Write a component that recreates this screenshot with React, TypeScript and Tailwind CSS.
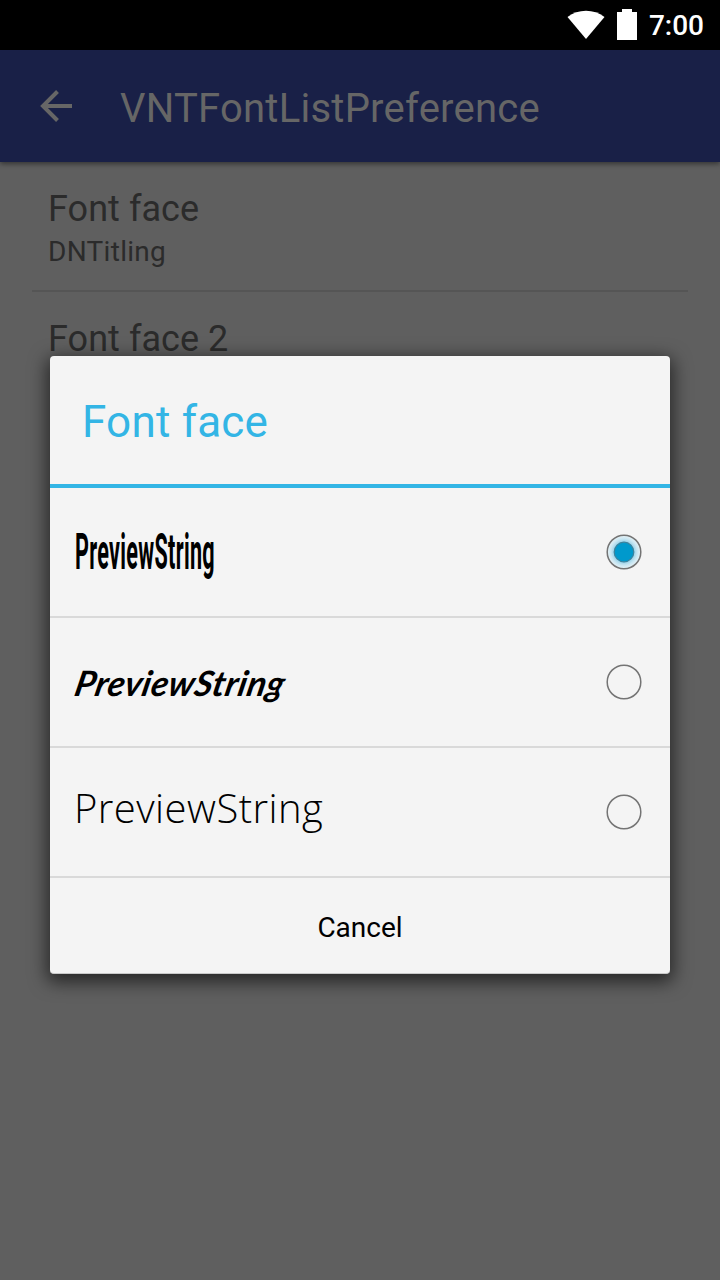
import React from "react";

type Face = { id: string; label: React.ReactNode; selected?: boolean };

const faces: Face[] = [
  {
    id: "titling",
    selected: true,
    label: (
      <span className="inline-block origin-left translate-x-px scale-x-[0.432] font-['Roboto'] text-[50px] leading-[60px] font-bold tracking-[0.7px]">
        PreviewString
      </span>
    ),
  },
  {
    id: "script",
    label: (
      <span className="inline-block origin-left translate-x-[2px] -skew-x-12 font-['Lato'] text-[35px] leading-[60px] font-bold tracking-[0.35px] italic">
        PreviewString
      </span>
    ),
  },
  {
    id: "hand",
    label: (
      <span className="inline-block origin-left translate-y-[-4px] font-['Open_Sans'] text-[40px] leading-[60px] font-light tracking-[0.45px]">
        PreviewString
      </span>
    ),
  },
];

function Radio({ selected }: { selected?: boolean }) {
  return (
    <svg width="40" height="40" viewBox="0 0 40 40" className="shrink-0">
      <defs>
        <radialGradient id="glow">
          <stop offset="0.55" stopColor="#8fcde6" />
          <stop offset="0.78" stopColor="#c8e6f2" />
          <stop offset="1" stopColor="#eaf3f6" />
        </radialGradient>
      </defs>
      <circle cx="20" cy="20" r="16.8" fill={selected ? "url(#glow)" : "none"} stroke="#747474" strokeWidth="1.5" />
      {selected && <circle cx="20" cy="20" r="9.8" fill="#0099cc" stroke="#3c829c" strokeWidth="1.2" />}
    </svg>
  );
}

function StatusBar() {
  return (
    <div className="flex h-[50px] shrink-0 items-center justify-end bg-black pr-4 text-white">
      <svg width="38" height="30" viewBox="0 0 38 30" className="mr-3" fill="currentColor">
        <path d="M0.5 7C11-1.5 27-1.5 37.5 7L19 29Z" />
      </svg>
      <svg width="20" height="31" viewBox="0 0 20 31" className="mr-3 -mt-0.5" fill="currentColor">
        <path d="M5 0h10v3h5v28H0V3h5Z" />
      </svg>
      <span className="pt-0.5 text-[28px] leading-8 font-medium">7:00</span>
    </div>
  );
}

export default function App() {
  return (
    <div className="relative flex h-[1280px] w-[720px] flex-col overflow-hidden bg-[#5f5f5f] font-['Roboto',sans-serif]">
      <StatusBar />
      <header className="z-0 flex h-28 shrink-0 items-center bg-[#192047] pl-10 text-[#666666] shadow-[0_2px_5px_rgba(0,0,0,0.45)]">
        <svg width="32" height="32" viewBox="0 0 32 32" className="mr-12" fill="none" stroke="currentColor" strokeWidth="4">
          <path d="M32 16H3M17.5 1.5L3 16L17.5 30.5" />
        </svg>
        <h1 className="pt-1.5 text-[40px] leading-[48px] tracking-[0.24px]">VNTFontListPreference</h1>
      </header>
      <main className="px-8 text-[#2b2b2b]">
        <div className="flex h-[130px] flex-col border-b-2 border-[#555555] px-4 pt-[26px]">
          <span className="text-[36px] leading-[43px] tracking-[0.05px]">Font face</span>
          <span className="text-[28px] leading-[42px] tracking-[0.3px]">DNTitling</span>
        </div>
        <div className="flex h-[130px] flex-col px-4 pt-[26px]">
          <span className="text-[36px] leading-[43px] tracking-[0.05px]">Font face 2</span>
        </div>
      </main>

      <section
        role="dialog"
        className="absolute top-[356px] left-[50px] flex h-[618px] w-[620px] flex-col rounded-[4px] border-b border-[#c9c9c9] bg-[#f4f4f4] shadow-[0_5px_18px_3px_rgba(0,0,0,0.6)]"
      >
        <div className="flex h-[132px] shrink-0 items-center border-b-4 border-[#33b5e5] pl-8 text-[44px] text-[#33b5e5]">
          <h2 className="pt-1 tracking-[0.22px]">Font face</h2>
        </div>
        {faces.map((face) => (
          <div key={face.id} className="flex h-[130px] shrink-0 items-center justify-between border-b-2 border-[#d9d9d9] pr-[26px] pl-6 text-black">
            {face.label}
            <Radio selected={face.selected} />
          </div>
        ))}
        <button className="flex-1 pt-1 text-center text-[28px] text-black">Cancel</button>
      </section>
    </div>
  );
}
